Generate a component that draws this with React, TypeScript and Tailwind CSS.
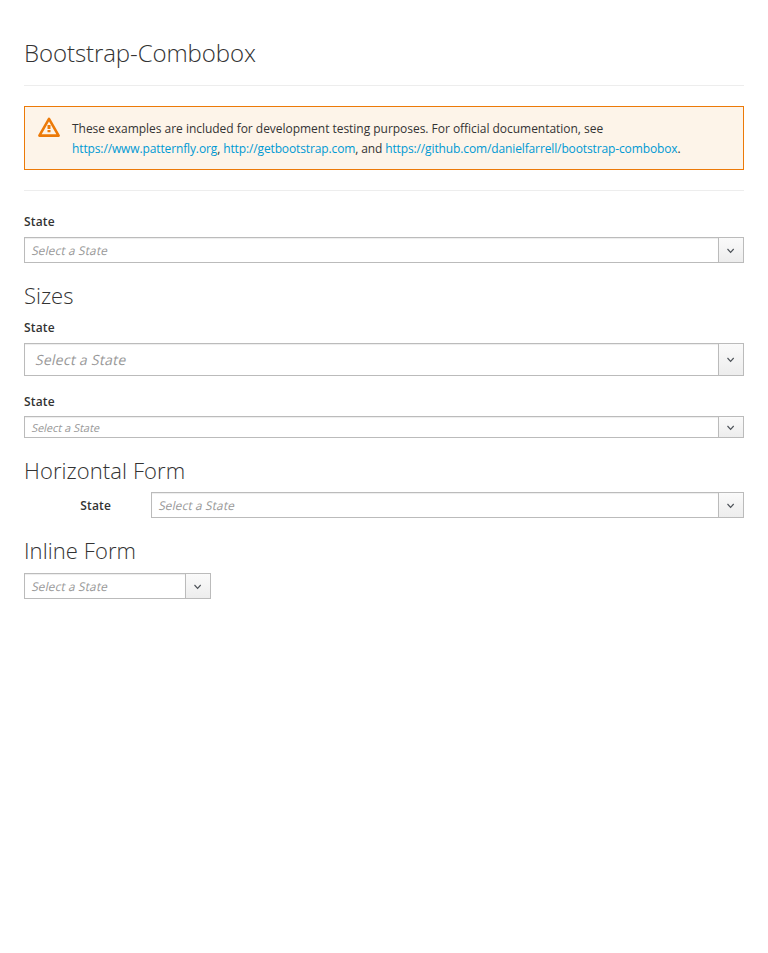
import React from "react";

function Combo({ size = "md", className = "" }: { size?: "md" | "lg" | "sm"; className?: string }) {
  const box = { md: "h-[26px]", lg: "h-[33px]", sm: "h-[22px]" }[size];
  const input = {
    md: "px-[7px] pt-0.5 text-[12px] tracking-[0.1px]",
    lg: "px-[11px] text-[14px] tracking-[0.27px]",
    sm: "px-[7px] pt-0.5 text-[11px] tracking-[-0.02px]",
  }[size];
  return (
    <div className={`flex ${box} ${className}`}>
      <div
        role="combobox"
        aria-expanded="false"
        className={`flex min-w-0 flex-1 items-center border border-r-0 border-[#bbb] bg-white text-[#999] shadow-[inset_0_1px_1px_rgba(3,3,3,0.075)] ${input}`}
      >
        <span className="inline-block -skew-x-12">Select a State</span>
      </div>
      <button className="flex w-[26px] items-center justify-center border border-[#bbb] bg-linear-to-b from-[#fafafa] to-[#ededed]">
        <svg className={size === "lg" ? "" : "relative top-px"} width="8" height="6" viewBox="0 0 8 6" fill="none" stroke="#4d5258" strokeWidth="1.15">
          <path d="M0.5 1 L3.6 4.3 L6.7 1" />
        </svg>
      </button>
    </div>
  );
}

const link = "text-[#0099d3]";

export default function App() {
  return (
    <div className="px-6 font-['Open_Sans',sans-serif] text-[12px] leading-5 text-[#333]">
      <div className="h-[86px] border-b border-[#ededed] pt-10">
        <h1 className="text-[24px] leading-[26px] font-light tracking-[-0.08px]">Bootstrap-Combobox</h1>
      </div>
      <div className="mt-5 flex h-16 border border-[#ec7a08] bg-[#fdf4e9] pt-3 pl-[13px]">
        <svg className="-mt-[3px] h-[22px] w-[22px] shrink-0" viewBox="0 0 22 22" fill="none">
          <path d="M11 2.8 L20.6 19.6 H1.4 Z" stroke="#ec7a08" strokeWidth="2.6" strokeLinejoin="round" />
          <path d="M9.5 9h3v4h-3zM9.5 14h3v2.2h-3z" fill="#ec7a08" />
        </svg>
        <p className="ml-3 tracking-[-0.125px]">
          <span className="tracking-[-0.03px]">These examples are included for development testing purposes. For official documentation, see</span>
          <br />
          <span className={link}>https://www.patternfly.org</span>, <span className={link}>http://getbootstrap.com</span>, and{" "}
          <span className={link}>https://github.com/danielfarrell/bootstrap-combobox</span>.
        </p>
      </div>
      <hr className="mt-5 border-[#ededed]" />
      <div className="mt-[21px] font-semibold tracking-[0.15px]">State</div>
      <Combo className="mt-[5px]" />
      <h2 className="mt-[19px] text-[22px] leading-[26px] font-light">Sizes</h2>
      <div className="mt-[10px] font-semibold tracking-[0.15px]">State</div>
      <Combo size="lg" className="mt-[5px]" />
      <div className="mt-4 font-semibold tracking-[0.15px]">State</div>
      <Combo size="sm" className="mt-1" />
      <h2 className="mt-[19px] text-[22px] leading-[26px] font-light tracking-[0.08px]">Horizontal Form</h2>
      <div className="mt-[9px] flex items-center">
        <div className="w-[87px] pt-0.5 text-right font-semibold tracking-[0.15px]">State</div>
        <Combo className="ml-10 flex-1" />
      </div>
      <h2 className="mt-[19px] text-[22px] leading-[26px] font-light tracking-[0.08px]">Inline Form</h2>
      <Combo className="mt-[10px] w-[187px]" />
    </div>
  );
}
